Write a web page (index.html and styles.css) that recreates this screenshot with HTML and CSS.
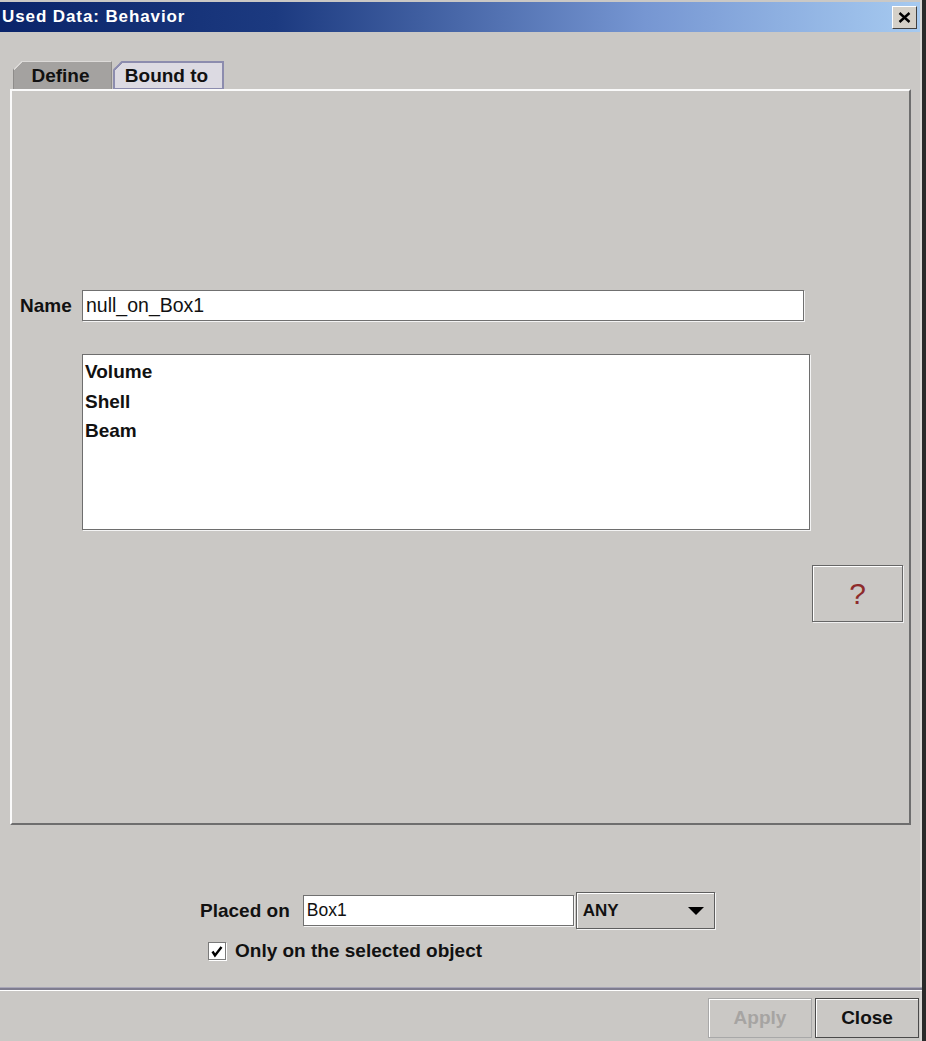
FILE: index.html
```html
<!DOCTYPE html>
<html lang="en">
<head>
    <meta charset="UTF-8">
    <title>Used Data: Behavior</title>
    <link rel="stylesheet" href="styles.css">
</head>
<body>
    <div class="window">
        <div class="titlebar">
            <span class="title">Used Data: Behavior</span>
            <div class="title-close">
                <svg width="13" height="11" viewBox="0 0 13 11">
                    <path d="M1.5 1 L11.5 10 M11.5 1 L1.5 10" stroke="#000" stroke-width="2.4" fill="none"/>
                </svg>
            </div>
        </div>

        <div class="content">
            <div class="tabs">
                <div class="tab tab-define">Define</div>
                <div class="tab tab-bound">Bound to</div>
            </div>

            <div class="panel">
                <div class="name-row">
                    <label class="lbl name-lbl">Name</label>
                    <div class="field name-field">null_on_Box1</div>
                </div>

                <ul class="list">
                    <li>Volume</li>
                    <li>Shell</li>
                    <li>Beam</li>
                </ul>

                <div class="help-btn">?</div>
            </div>

            <div class="placement">
                <div class="place-row">
                    <span class="lbl">Placed on</span>
                    <div class="field place-field">Box1</div>
                    <div class="combo">
                        <span>ANY</span>
                        <span class="combo-arrow"></span>
                    </div>
                </div>
                <div class="check-row">
                    <span class="checkbox">
                        <svg width="14" height="14" viewBox="0 0 14 14">
                            <path d="M2.5 7.5 L5 11.5 L11.5 3" stroke="#000" stroke-width="2.4" fill="none"/>
                        </svg>
                    </span>
                    <span class="lbl">Only on the selected object</span>
                </div>
            </div>
        </div>

        <div class="separator"></div>

        <div class="footer">
            <div class="btn btn-disabled">Apply</div>
            <div class="btn">Close</div>
        </div>
    </div>
</body>
</html>
```

FILE: styles.css
```css
body {
    margin: 0;
    background: #cac8c5;
    font-family: "Liberation Sans", Arial, sans-serif;
    color: #111;
}

.window {
    width: 926px;
    height: 1041px;
    box-sizing: border-box;
    border-right: 4px solid #2a2a2a;
    display: flex;
    flex-direction: column;
    background: #cac8c5;
    box-shadow: inset -2px 0 0 #d8d6d4;
}

/* title bar */
.titlebar {
    margin-top: 2px;
    margin-right: 2px;
    height: 30px;
    display: flex;
    align-items: center;
    justify-content: space-between;
    padding: 0 3px 0 2px;
    background: linear-gradient(to right, #0a246a 0%, #1c3a80 30%, #7696d2 70%, #a6caf0 100%);
}

.title {
    color: #fff;
    font-weight: bold;
    font-size: 17px;
    letter-spacing: 0.9px;
}

.title-close {
    width: 25px;
    height: 23px;
    box-sizing: border-box;
    background: #d4d0c8;
    border: 1px solid;
    border-color: #fff #404040 #404040 #fff;
    display: flex;
    align-items: center;
    justify-content: center;
}

/* main area */
.content {
    flex: 1;
    display: flex;
    flex-direction: column;
}

.tabs {
    display: flex;
    gap: 1px;
    margin: 29px 0 0 13px;
    height: 28px;
}

.tab {
    box-sizing: border-box;
    height: 28px;
    font-weight: bold;
    font-size: 19px;
    display: flex;
    align-items: center;
    justify-content: center;
    clip-path: polygon(8.5px 0, 100% 0, 100% 100%, 0 100%, 0 8.5px);
}

.tab-define {
    width: 99px;
    padding-right: 4px;
    border: 1px solid #8e8c8a;
    border-top-color: #dddbd9;
    border-bottom: none;
    background: linear-gradient(135deg, transparent 0 6px, #dddbd9 6px 7.5px, #a4a2a0 7.5px) border-box;
}

.tab-bound {
    width: 111px;
    padding-right: 4px;
    border: 2px solid #8c8cae;
    border-bottom-width: 1px;
    background: linear-gradient(135deg, transparent 0 6px, #8c8cae 6px 8px, #dcdae2 8px) border-box;
}

.panel {
    box-sizing: border-box;
    height: 736px;
    margin: 0 11px 0 10px;
    border: 2px solid;
    border-color: #fafafa #6e6e6e #6e6e6e #fafafa;
    display: flex;
    flex-direction: column;
}

.lbl {
    font-weight: bold;
    font-size: 19px;
}

.name-row {
    margin-top: 199px;
    padding-left: 8px;
    display: flex;
    align-items: center;
}

.name-lbl {
    width: 62px;
}

.field {
    box-sizing: border-box;
    height: 31px;
    background: #fff;
    border: 1px solid #707070;
    box-shadow: 1px 1px 0 #f4f4f4;
    font-size: 19.5px;
    padding-left: 3px;
    display: flex;
    align-items: center;
}

.name-field {
    width: 722px;
}

.list {
    list-style: none;
    margin: 33px 0 0 70px;
    padding: 2px 0 0 2px;
    box-sizing: border-box;
    width: 728px;
    height: 176px;
    background: #fff;
    border: 1px solid #6e6e6e;
    box-shadow: 1px 1px 0 #f4f4f4;
}

.list li {
    font-weight: bold;
    font-size: 19px;
    line-height: 29.5px;
}

.help-btn {
    align-self: flex-end;
    margin: 35px 6px 0 0;
    box-sizing: border-box;
    width: 91px;
    height: 57px;
    border: 1px solid #666;
    box-shadow: inset 1px 1px 0 #fff, 1px 1px 0 #f0f0f0;
    color: #8e2b2b;
    font-size: 30px;
    display: flex;
    align-items: center;
    justify-content: center;
}

/* placement */
.placement {
    padding-left: 200px;
}

.place-row {
    margin-top: 67px;
    display: flex;
    align-items: center;
    height: 37px;
}

.place-field {
    width: 271px;
    margin-left: 13px;
    padding-left: 3px;
    font-size: 17.5px;
}

.combo {
    box-sizing: border-box;
    width: 139px;
    height: 37px;
    margin-left: 2px;
    border: 1px solid #5e5e5e;
    box-shadow: inset 1px 1px 0 #fff, 1px 1px 0 #f4f4f4;
    display: flex;
    align-items: center;
    justify-content: space-between;
    padding: 0 10px 0 6px;
    font-weight: bold;
    font-size: 17px;
}

.combo-arrow {
    width: 0;
    height: 0;
    border-left: 8px solid transparent;
    border-right: 8px solid transparent;
    border-top: 8px solid #000;
}

.check-row {
    margin: 11px 0 0 8px;
    display: flex;
    align-items: center;
    gap: 9px;
}

.checkbox {
    box-sizing: border-box;
    width: 18px;
    height: 18px;
    background: #fff;
    border: 1px solid #7a7a7a;
    box-shadow: 1px 1px 0 #fff;
    display: flex;
    align-items: center;
    justify-content: center;
}

/* bottom */
.separator {
    height: 2px;
    background: #7f7d90;
    border-top: 1px solid #a9a7b8;
    border-bottom: 1px solid #fff;
}

.footer {
    display: flex;
    justify-content: flex-end;
    gap: 3px;
    padding: 7px 3px 3px 0;
}

.btn {
    box-sizing: border-box;
    width: 104px;
    height: 40px;
    border: 1px solid #4a4a4a;
    box-shadow: inset 1px 1px 0 #fff;
    font-weight: bold;
    font-size: 19px;
    display: flex;
    align-items: center;
    justify-content: center;
}

.btn-disabled {
    border-color: #a8a8a8;
    color: #a6a4a2;
}
```
